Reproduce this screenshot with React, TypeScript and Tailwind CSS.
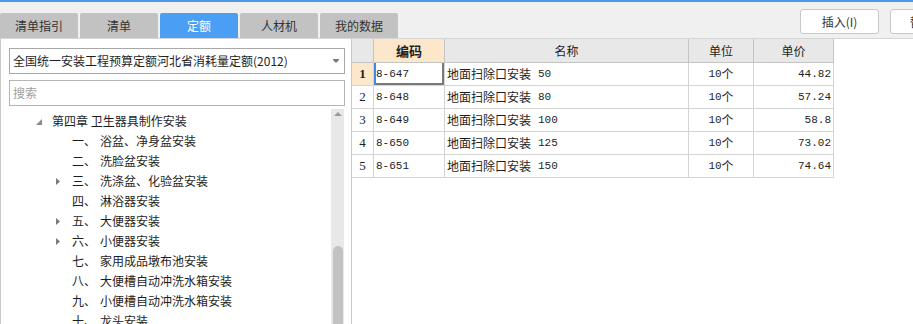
const tabs = ['清单指引', '清单', '定额', '人材机', '我的数据'];

const tree = [
  { no: '一、', name: '浴盆、净身盆安装' },
  { no: '二、', name: '洗脸盆安装' },
  { no: '三、', name: '洗涤盆、化验盆安装', more: true },
  { no: '四、', name: '淋浴器安装' },
  { no: '五、', name: '大便器安装', more: true },
  { no: '六、', name: '小便器安装', more: true },
  { no: '七、', name: '家用成品墩布池安装' },
  { no: '八、', name: '大便槽自动冲洗水箱安装' },
  { no: '九、', name: '小便槽自动冲洗水箱安装' },
  { no: '十、', name: '龙头安装' },
];

const rows = [
  { code: '8-647', size: '50', price: '44.82' },
  { code: '8-648', size: '80', price: '57.24' },
  { code: '8-649', size: '100', price: '58.8' },
  { code: '8-650', size: '125', price: '73.02' },
  { code: '8-651', size: '150', price: '74.64' },
];

const cell = 'border-r border-b border-[#d4d4d4] h-[23px] flex items-center';
const mono = "font-['Liberation_Mono','Noto_Sans_CJK_SC',monospace] text-[11px]";

export default function App() {
  return (
    <div className="w-[913px] h-[324px] overflow-hidden bg-[#f0f0f0] flex flex-col font-['Noto_Sans_CJK_SC',sans-serif] text-[12px] text-[#1e1e1e]">
      <div className="h-[2px] shrink-0 bg-[#4d97e8]" />

      {/* tab strip + toolbar buttons */}
      <div className="h-[36px] shrink-0 flex">
        <div className="flex gap-[2px] mt-[11px] shrink-0">
          {tabs.map((t) => (
            <div
              key={t}
              className={
                'w-[78px] h-[25px] rounded-t-[2px] flex items-center justify-center ' +
                (t === '定额' ? 'bg-[#4a9ff5] text-white' : 'bg-[#c2c2c2] text-[#333]')
              }
            >
              {t}
            </div>
          ))}
        </div>
        <div className="flex gap-[11px] mt-[7px] ml-[402px] shrink-0">
          <button className="w-[79px] h-[25px] bg-white border border-[#c8c8c8] rounded-[3px] text-[#333]">
            插入(I)
          </button>
          <button className="w-[79px] h-[25px] bg-white border border-[#c8c8c8] rounded-[3px] text-[#333]">
            替换(R)
          </button>
        </div>
      </div>

      <div className="flex-1 min-h-0 flex border-t border-[#d6d6d6]">
        {/* left: quota library tree */}
        <div className="w-[351px] shrink-0 bg-white border-l border-[#c8c8c8] flex flex-col">
          <div className="pl-[8px] pr-[6px] pt-[9px] flex flex-col gap-[6px]">
            <div className="h-[26px] border border-[#a8a8a8] flex items-center justify-between pl-[3px] pr-[5px]">
              <span>全国统一安装工程预算定额河北省消耗量定额(2012)</span>
              <svg width="6" height="4" viewBox="0 0 6 4">
                <rect x="0" y="0" width="6" height="1" fill="#7a7a7a" />
                <polygon points="0,1 6,1 3,4" fill="#7a7a7a" />
              </svg>
            </div>
            <div className="h-[26px] border border-[#b4b4b4] flex items-center pl-[3px] text-[#a0a0a0]">
              搜索
            </div>
          </div>
          <div className="flex-1 min-h-0 flex mt-[3px]">
            <div className="flex-1 flex flex-col pt-[2px]">
              <div className="h-[20px] shrink-0 flex items-center pl-[35px]">
                <svg width="6" height="6" viewBox="0 0 6 6" className="mt-[2px]">
                  <polygon points="6,0 6,6 0,6" fill="#8a8a8a" />
                </svg>
                <span className="ml-[10px]">第四章 卫生器具制作安装</span>
              </div>
              {tree.map((r) => (
                <div key={r.no} className="h-[20px] shrink-0 flex items-center pl-[55px]">
                  <span className="w-[16px] flex">
                    {r.more && (
                      <svg width="4" height="7" viewBox="0 0 4 7">
                        <polygon points="0,0 4,3.5 0,7" fill="#7a7a7a" />
                      </svg>
                    )}
                  </span>
                  <span className="w-[28px]">{r.no}</span>
                  <span>{r.name}</span>
                </div>
              ))}
            </div>
            {/* scrollbar */}
            <div className="w-[13px] mr-[7px] bg-[#e8e8e8] flex flex-col items-center">
              <svg width="8" height="4" viewBox="0 0 8 4" className="mt-[3px]">
                <polygon points="0,4 4,0 8,4" fill="#9a9a9a" />
              </svg>
              <div className="mt-[130px] w-[10px] flex-1 bg-[#c2c2c2] rounded-t-[5px]" />
            </div>
          </div>
        </div>

        {/* right: quota items grid */}
        <div className="flex-1 bg-white border-l border-[#c8c8c8]">
          <div className="grid grid-cols-[22px_71px_244px_65px_80px] w-max">
            <div className="border-r border-b border-[#c4c4c4] h-[24px] bg-[#e8e8e8]" />
            <div className="border-r border-b border-[#c4c4c4] h-[24px] bg-[#fde7cb] flex items-center justify-center font-bold text-[13px]">
              编码
            </div>
            <div className="border-r border-b border-[#c4c4c4] h-[24px] bg-[#e8e8e8] flex items-center justify-center">
              名称
            </div>
            <div className="border-r border-b border-[#c4c4c4] h-[24px] bg-[#e8e8e8] flex items-center justify-center">
              单位
            </div>
            <div className="border-r border-b border-[#c4c4c4] h-[24px] bg-[#e8e8e8] flex items-center justify-center">
              单价
            </div>
            {rows.map((r, i) => (
              <div key={r.code} className="contents">
                <div
                  className={
                    cell +
                    " justify-center font-['Liberation_Serif',serif] text-[13px] " +
                    (i === 0 ? 'bg-[#fde7cb] font-bold' : '')
                  }
                >
                  {i + 1}
                </div>
                <div
                  className={
                    cell +
                    ' pl-[2px] ' +
                    mono +
                    (i === 0 ? ' shadow-[inset_2px_0_0_#3c8ce7,inset_-2px_-2px_0_#7a7a7a]' : '')
                  }
                >
                  {r.code}
                </div>
                <div className={cell + ' pl-[2px]'}>
                  地面扫除口安装
                  <span className={mono + ' ml-[7px]'}>{r.size}</span>
                </div>
                <div className={cell + ' justify-center'}>
                  <span className={mono}>10</span>个
                </div>
                <div className={cell + ' justify-end pr-[2px] ' + mono}>{r.price}</div>
              </div>
            ))}
          </div>
        </div>
      </div>
    </div>
  );
}
